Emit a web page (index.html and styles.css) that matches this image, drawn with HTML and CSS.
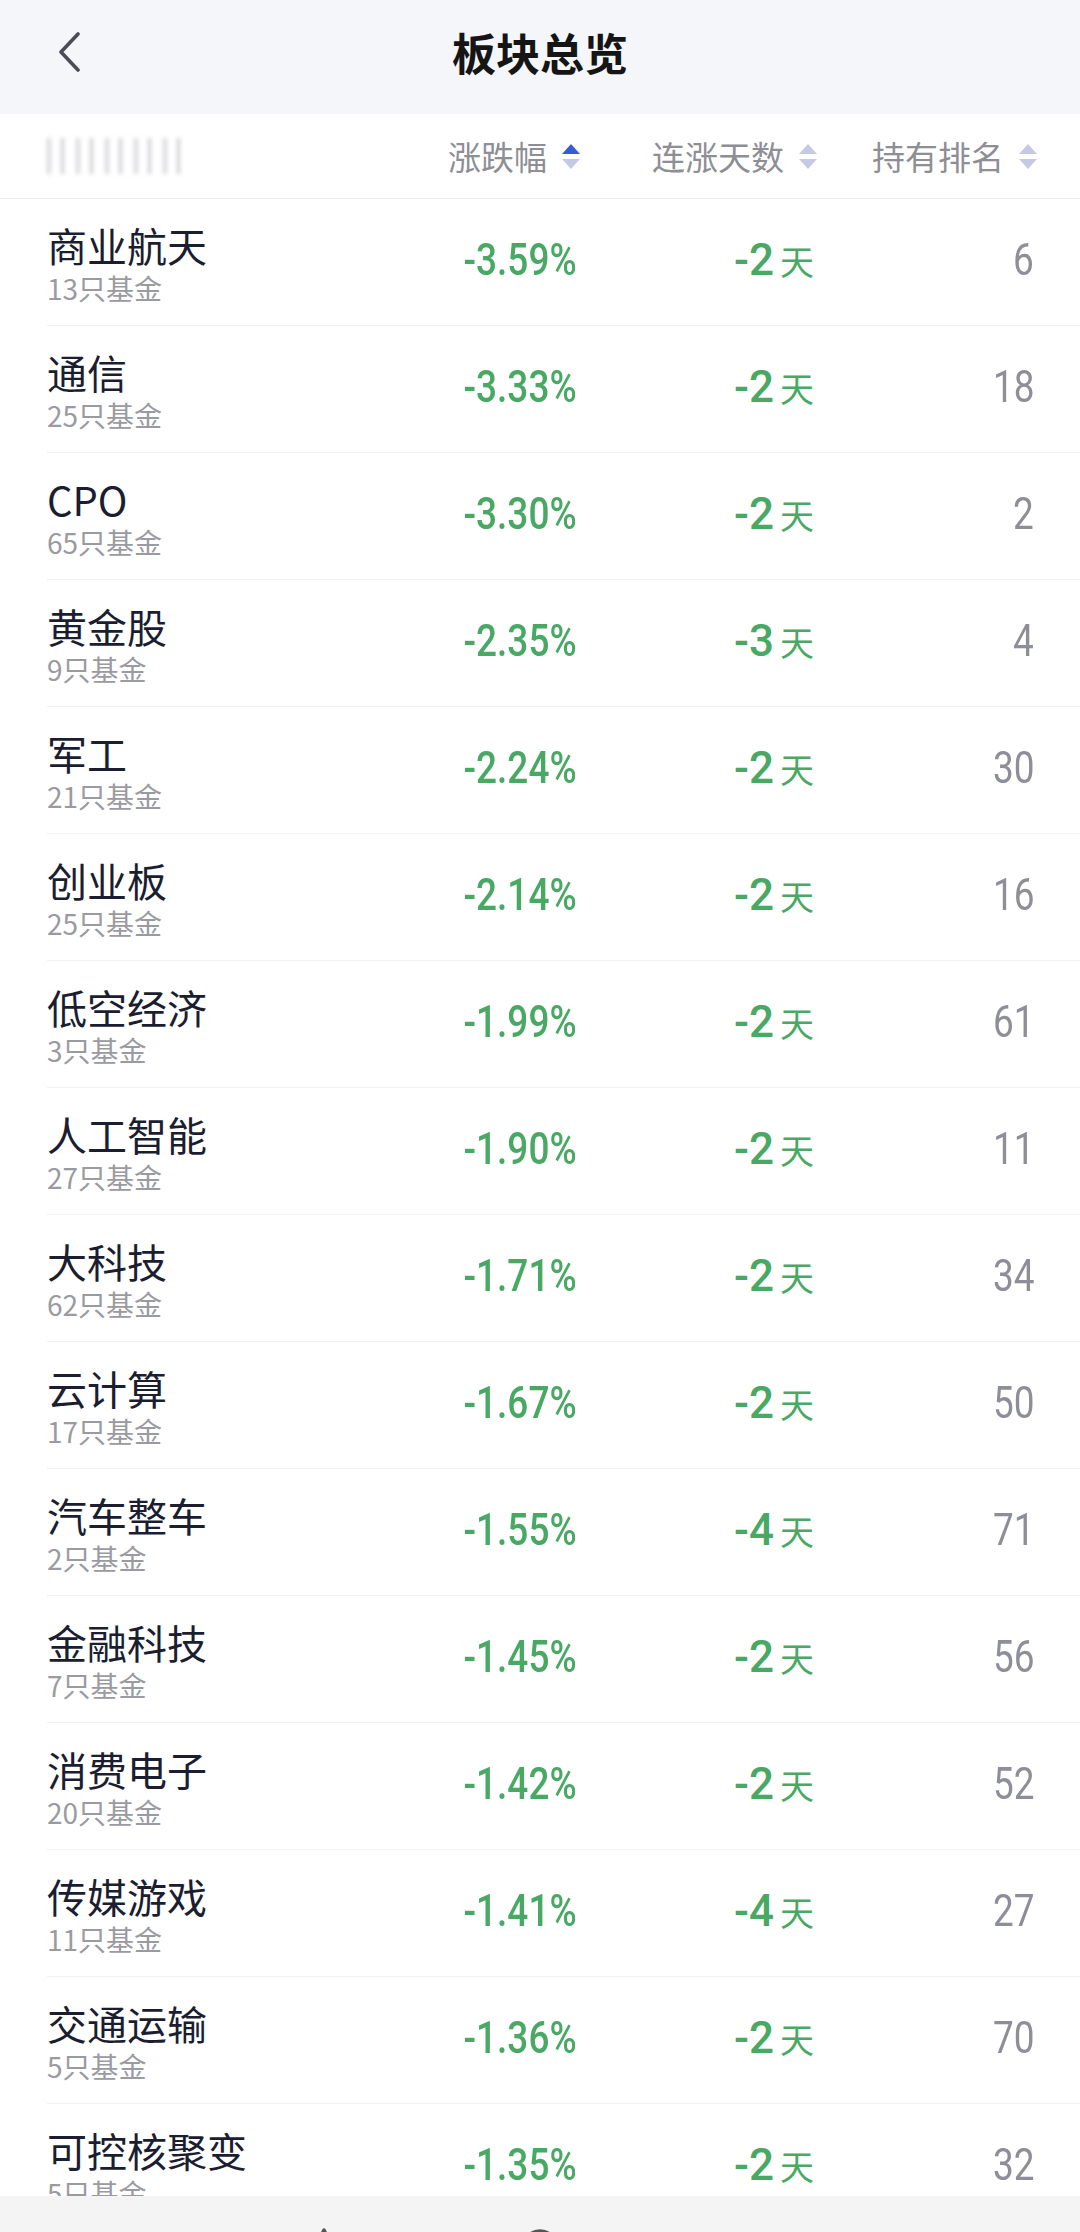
FILE: index.html
```html
<!DOCTYPE html>
<html lang="zh-CN">
<head>
    <meta charset="UTF-8">
    <meta name="viewport" content="width=device-width, initial-scale=1.0">
    <title>板块总览</title>
    <link rel="stylesheet" href="styles.css">
</head>
<body>
    <div class="topbar">
        <svg class="back" width="24" height="40" viewBox="0 0 24 40">
            <path d="M21 2 L4 20 L21 38" fill="none" stroke="#4a4d57" stroke-width="3.6" stroke-linecap="round" stroke-linejoin="round"/>
        </svg>
        <h1>板块总览</h1>
    </div>

    <div class="table-head">
        <div class="blur-label"></div>
        <div class="th">涨跌幅<span class="sort"><i class="up on"></i><i class="down"></i></span></div>
        <div class="th">连涨天数<span class="sort"><i class="up"></i><i class="down"></i></span></div>
        <div class="th">持有排名<span class="sort"><i class="up"></i><i class="down"></i></span></div>
    </div>

    <div class="list" id="list"></div>

    <div class="navbar">
        <svg class="nav-icon" width="40" height="40" viewBox="0 0 40 40"><path d="M20 2 L37 36 L3 36 Z" fill="none" stroke="#555" stroke-width="3.5" stroke-linejoin="round"/></svg>
        <svg class="nav-icon" width="40" height="40" viewBox="0 0 40 40"><circle cx="20" cy="20" r="17" fill="none" stroke="#555" stroke-width="3.5"/></svg>
    </div>

    <script>
        const sectors = [
            ['商业航天', 13, '-3.59%', '-2', 6],
            ['通信', 25, '-3.33%', '-2', 18],
            ['CPO', 65, '-3.30%', '-2', 2],
            ['黄金股', 9, '-2.35%', '-3', 4],
            ['军工', 21, '-2.24%', '-2', 30],
            ['创业板', 25, '-2.14%', '-2', 16],
            ['低空经济', 3, '-1.99%', '-2', 61],
            ['人工智能', 27, '-1.90%', '-2', 11],
            ['大科技', 62, '-1.71%', '-2', 34],
            ['云计算', 17, '-1.67%', '-2', 50],
            ['汽车整车', 2, '-1.55%', '-4', 71],
            ['金融科技', 7, '-1.45%', '-2', 56],
            ['消费电子', 20, '-1.42%', '-2', 52],
            ['传媒游戏', 11, '-1.41%', '-4', 27],
            ['交通运输', 5, '-1.36%', '-2', 70],
            ['可控核聚变', 5, '-1.35%', '-2', 32]
        ];

        const list = document.getElementById('list');
        sectors.forEach(([name, funds, change, days, rank]) => {
            const row = document.createElement('div');
            row.className = 'row';
            row.innerHTML = `
                <div class="name-cell">
                    <div class="name">${name}</div>
                    <div class="funds">${funds}只基金</div>
                </div>
                <div class="num green"><span class="narrow">${change}</span></div>
                <div class="num green"><span>${days}</span><span class="unit">天</span></div>
                <div class="num rank"><span class="narrow">${rank}</span></div>`;
            list.appendChild(row);
        });
    </script>
</body>
</html>
```

FILE: styles.css
```css
body {
    margin: 0;
    background: #fff;
    font-family: 'Noto Sans CJK SC', 'Noto Sans', sans-serif;
    overflow: hidden;
}
.topbar {
    height: 114px;
    box-sizing: border-box;
    padding-bottom: 10px;
    background: #f5f6fa;
    display: flex;
    align-items: center;
    justify-content: center;
    position: relative;
}
.topbar h1 {
    margin: 0;
    font-size: 44px;
    font-weight: bold;
    color: #151515;
    line-height: 1;
}
.back {
    position: absolute;
    left: 57px;
    top: 32px;
}
.table-head, .row {
    display: grid;
    grid-template-columns: 1fr 160px 237px 220px;
    align-items: center;
}
.table-head {
    height: 85px;
    box-sizing: border-box;
    padding: 0 43px 0 47px;
    border-bottom: 1px solid #ececef;
}
.blur-label {
    width: 136px;
    height: 36px;
    background: repeating-linear-gradient(90deg, #cfcfd4 0 4px, transparent 4px 14px, #bdbdc4 14px 17px, transparent 17px 29px);
    filter: blur(2px);
    opacity: 0.8;
}
.th {
    display: flex;
    justify-content: flex-end;
    align-items: center;
    font-size: 33px;
    color: #8e8e95;
}
.sort {
    display: flex;
    flex-direction: column;
    gap: 5px;
    margin-left: 15px;
}
.sort i {
    width: 0;
    height: 0;
    border-left: 9px solid transparent;
    border-right: 9px solid transparent;
}
.sort .up {
    border-bottom: 10px solid #c6c9e6;
}
.sort .down {
    border-top: 10px solid #c6c9e6;
}
.sort .up.on {
    border-bottom-color: #3b5bd6;
}
.row {
    height: 127px;
    box-sizing: border-box;
    margin-left: 47px;
    padding-right: 46px;
    border-bottom: 1px solid #f1f1f3;
}
.name-cell {
    align-self: start;
    padding-top: 21px;
}
.name {
    font-size: 40px;
    line-height: 50px;
    color: #1b1d30;
}
.funds {
    font-size: 28px;
    line-height: 36px;
    color: #9a9aa1;
}
.num {
    display: flex;
    justify-content: flex-end;
    align-items: baseline;
    font-family: 'Roboto', sans-serif;
    font-size: 44px;
    line-height: 50px;
    margin-top: -4px;
}
.narrow {
    display: inline-block;
    transform: scaleX(0.84);
    transform-origin: right center;
}
.green {
    color: #48a864;
    font-weight: 500;
}
.unit {
    font-family: 'Noto Sans CJK SC', sans-serif;
    font-size: 34px;
    font-weight: normal;
    margin-left: 6px;
}
.rank {
    color: #8e8e98;
}
.navbar {
    position: fixed;
    left: 0;
    right: 0;
    bottom: 0;
    height: 36px;
    background: #f4f4f4;
    display: flex;
    justify-content: center;
    gap: 176px;
    overflow: hidden;
    padding-right: 216px;
}
.nav-icon {
    margin-top: 32px;
}
```
